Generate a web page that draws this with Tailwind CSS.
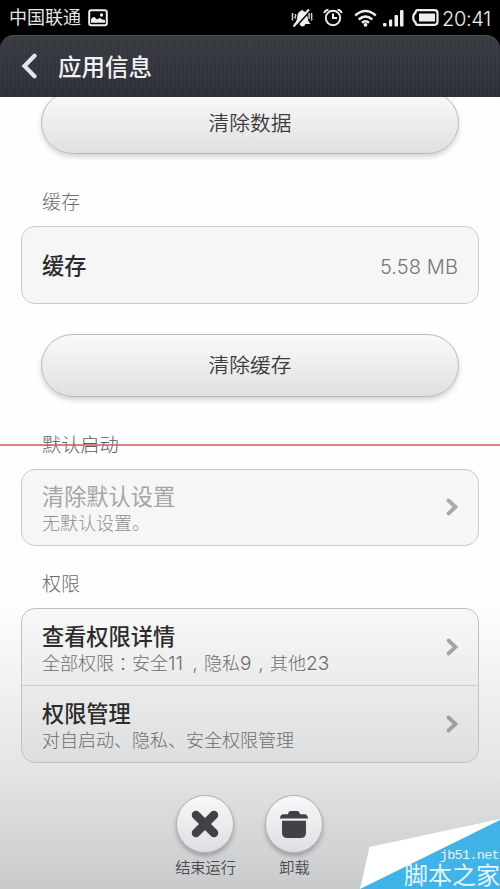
<!DOCTYPE html>
<html lang="zh-CN">
<head>
<meta charset="utf-8">
<title>应用信息</title>
<script src="https://cdn.jsdelivr.net/npm/@tailwindcss/browser@4"></script>
</head>
<body class="bg-black">
<div class="relative flex h-[889px] w-[500px] flex-col overflow-hidden bg-black font-['Roboto','Noto_Sans_CJK_SC',sans-serif]">
  <!-- status bar -->
  <div class="flex h-[35px] shrink-0 items-center pl-[9px] pr-[7px] text-[#e4e4e4]">
    <span class="pt-px text-[18px] leading-[34px]">中国联通</span>
    <svg class="ml-[7px]" width="20" height="18" viewBox="0 0 20 18"><rect x="1.200" y="1.200" width="17.600" height="15" rx="2" fill="none" stroke="#eee" stroke-width="2"/><path d="M3 13.800v-3.300q2-3.500 4-2l2 2 2.500-1.500q2 0 2.500 1.500l3 .5v2.800z" fill="#eee"/><circle cx="13.500" cy="6" r="1.700" fill="#eee"/></svg>
    <div class="ml-auto flex items-center">
      <svg width="22" height="20" viewBox="0 0 22 20"><path d="M3 16q3-2.500 3.200-7Q6.500 4 9.800 3q1.200-2.200 2.600 0Q16.500 4.500 16.500 9q.2 4.500 3 7zM8.500 16h6q-1 2.500-3 2.500t-3-2.500z" fill="#eee"/><path d="M4 19.500 19.500 2.500" stroke="#000" stroke-width="1.800"/><path d="M2.500 18.500 18 1.500" stroke="#eee" stroke-width="2"/><path d="M1 5l1 1.500L1 8l1 1.500L1 11l1 1.500M4 6l.8 1.500L4 9l.6 1.500M18.500 5l-.7 1.500.7 1.500-.7 1.500.7 1.500M21 5l-.7 1.500L21 8l-.7 1.500.7 1.500-.7 1.500" fill="none" stroke="#ddd" stroke-width="1.300"/></svg>
      <svg class="ml-[10px]" width="20" height="19" viewBox="0 0 20 19"><circle cx="10" cy="10" r="7.200" fill="none" stroke="#eee" stroke-width="1.900"/><path d="M10 5.500V10h4M1.200 5Q2 2 5.500 1.700M18.800 5Q18 2 14.500 1.700" fill="none" stroke="#eee" stroke-width="2"/></svg>
      <svg class="ml-[11px]" width="23" height="18" viewBox="0 0 23 18"><g fill="none" stroke="#eee" stroke-width="2.500"><path d="M1.200 6.500q10.300-9 20.600 0"/><path d="M4.700 10.500q6.800-6 13.600 0"/><path d="M8 13.800q3.500-3 7 0"/></g><circle cx="11.500" cy="15.800" r="1.900" fill="#eee"/></svg>
      <svg class="ml-[6px]" width="21" height="18" viewBox="0 0 21 18" fill="#eee"><rect x="0" y="14" width="3.500" height="3.500" rx="1"/><rect x="6" y="10.500" width="3.200" height="7" rx="1"/><rect x="11.500" y="6" width="3.500" height="11.500" rx="1"/><rect x="17" y="1" width="3.500" height="16.500" rx="1"/></svg>
      <svg class="ml-[8px]" width="27" height="17" viewBox="0 0 27 17"><path d="M5.500 1.200h17q3 0 3 3v8.600q0 3-3 3h-17q-2 0-2-2.500Q1.200 12 1.200 8.500T3.500 3.700q0-2.500 2-2.500z" fill="none" stroke="#eee" stroke-width="2.200"/><rect x="7" y="4.500" width="16" height="8" rx=".5" fill="#eee"/></svg>
      <span class="ml-[3px] w-[51px] whitespace-nowrap pt-[2px] font-['Inter','Roboto',sans-serif] text-[20px] font-light leading-[34px] tracking-[-0.300px] text-[#f0f0f0]">20:41</span>
    </div>
  </div>
  <!-- title bar -->
  <div class="flex h-[62px] shrink-0 items-center rounded-t-[14px] border-t border-[#4b4e55] bg-[repeating-linear-gradient(90deg,#ffffff07_0px,#ffffff07_1px,transparent_1px,transparent_4px),linear-gradient(#393c43,#2c2f37)] pl-[21px]">
    <svg class="mb-[2px]" width="17" height="26" viewBox="0 0 17 26"><path d="M13.500 2.800 3.500 13l10 10.200" fill="none" stroke="#e4e6e6" stroke-width="4.200" stroke-linecap="round"/></svg>
    <span class="ml-[20px] pt-[3px] text-[23.500px] font-medium leading-[60px] text-[#f2f2f2]">应用信息</span>
  </div>
  <!-- content -->
  <div class="flex min-h-0 flex-1 flex-col overflow-hidden bg-[linear-gradient(#fefefe_0px,#fefefe_500px,#e4e5e7_670px,#c9cacc_792px)] px-[21px]">
    <div class="mx-[20px] -mt-[6px] h-[63px] shrink-0 rounded-full border border-[#b9b9b9] bg-linear-to-b from-[#fafafa] to-[#e0e0e0] text-center text-[20.700px] font-[350] leading-[65px] text-[#3c3c3c] shadow-[0_3px_5px_#0000002b]">清除数据</div>
    <div class="mt-[35px] h-[37px] shrink-0 pl-[21px] text-[19px] font-light leading-[28px] text-[#6c6c6c]">缓存</div>
    <div class="flex h-[78px] shrink-0 items-center justify-between rounded-[14px] border border-[#cbcbcb] bg-[#f6f6f6] px-[20px]">
      <span class="pt-[4px] text-[22.200px] font-medium text-[#2c2c2c]">缓存</span>
      <span class="pt-[3px] font-['Inter','Roboto',sans-serif] text-[20px] font-light tracking-[0.100px] text-[#777]">5.58 MB</span>
    </div>
    <div class="mx-[20px] mt-[30px] h-[63px] shrink-0 rounded-full border border-[#b9b9b9] bg-linear-to-b from-[#fafafa] to-[#e0e0e0] text-center text-[20.700px] font-[350] leading-[62px] text-[#3c3c3c] shadow-[0_3px_5px_#0000002b]">清除缓存</div>
    <div class="mt-[35px] h-[37px] shrink-0 pl-[21px] text-[19.200px] font-light leading-[28px] text-[#5c5c5c]">默认启动</div>
    <div class="flex h-[77px] shrink-0 items-center justify-between rounded-[14px] border border-[#cbcbcb] bg-[#f6f6f6] pl-[20px] pr-[19px]">
      <div class="pt-[4px]">
        <div class="text-[22.200px] leading-[28px] text-[#a5a5a5]">清除默认设置</div>
        <div class="text-[18px] font-light leading-[26px] text-[#8f8f8f]">无默认设置。</div>
      </div>
      <svg class="mb-[1px]" width="14" height="20" viewBox="0 0 14 20"><path d="M3.500 3.500 10.500 10l-7 6.500" fill="none" stroke="#a8a8a8" stroke-width="3.800" stroke-linecap="round"/></svg>
    </div>
    <div class="mt-[25px] h-[37px] shrink-0 pl-[21px] text-[19px] font-light leading-[28px] text-[#6c6c6c]">权限</div>
    <div class="h-[155px] shrink-0 rounded-[14px] border border-[#c0c1c2] bg-linear-to-b from-[#f8f8f8] to-[#dddedf]">
      <div class="flex h-[77px] items-center justify-between border-b border-[#cdcdce] pl-[20px] pr-[19px]">
        <div class="pt-[5px]">
          <div class="text-[22.200px] font-medium leading-[28px] text-[#2c2c2c]">查看权限详情</div>
          <div class="flex h-[25px] whitespace-nowrap text-[18px] font-light leading-[25px] text-[#6c6c6c]"><span>全部权限</span><span lang="zh-TW" class="font-['Noto_Sans_CJK_TC',sans-serif]">：</span><span>安全</span><span class="w-[18px] font-['Inter','Roboto',sans-serif] text-[19px]">11</span><span class="w-[18px] text-center font-['Inter','Roboto',sans-serif]">,</span><span>隐私</span><span class="w-[12px] font-['Inter','Roboto',sans-serif] text-[19px]">9</span><span class="w-[18px] text-center font-['Inter','Roboto',sans-serif]">,</span><span>其他</span><span class="font-['Inter','Roboto',sans-serif] text-[19px]">23</span></div>
        </div>
        <svg class="mb-[1px]" width="14" height="20" viewBox="0 0 14 20"><path d="M3.500 3.500 10.500 10l-7 6.500" fill="none" stroke="#a4a4a4" stroke-width="3.800" stroke-linecap="round"/></svg>
      </div>
      <div class="flex h-[76px] items-center justify-between pl-[20px] pr-[19px]">
        <div class="pt-[5px]">
          <div class="text-[22.200px] font-medium leading-[28px] text-[#2c2c2c]">权限管理</div>
          <div class="text-[18px] font-light leading-[26px] text-[#6c6c6c]">对自启动、隐私、安全权限管理</div>
        </div>
        <svg class="mb-[1px]" width="14" height="20" viewBox="0 0 14 20"><path d="M3.500 3.500 10.500 10l-7 6.500" fill="none" stroke="#a0a0a0" stroke-width="3.800" stroke-linecap="round"/></svg>
      </div>
    </div>
    <div class="mt-[32px] flex shrink-0 justify-center gap-[19px]">
      <div class="flex w-[70px] flex-col items-center">
        <div class="mr-[1px] flex size-[58px] items-center justify-center rounded-full border border-[#aeb0b3] bg-linear-to-b from-[#f8f8f9] to-[#dedfe2] shadow-[0_3px_4px_#00000040]">
          <svg width="28" height="28" viewBox="0 0 28 28"><path d="M5 5l18 18M23 5 5 23" stroke="#404246" stroke-width="8.500" stroke-linecap="round"/></svg>
        </div>
        <div class="mt-[4px] whitespace-nowrap text-[15.200px] font-[350] leading-[22px] text-[#484a4d]">结束运行</div>
      </div>
      <div class="flex w-[70px] flex-col items-center">
        <div class="mr-[1px] flex size-[58px] items-center justify-center rounded-full border border-[#aeb0b3] bg-linear-to-b from-[#f8f8f9] to-[#dedfe2] shadow-[0_3px_4px_#00000040]">
          <svg width="28" height="28" viewBox="0 0 28 28" fill="#404246"><path d="M0 8.500q0-4.300 4-4.300h4q.5-3.200 3-3.200h6q2.500 0 3 3.200h4q4 0 4 4.300z"/><path d="M2 10.700h24v11.800q0 5.500-5.500 5.500h-13Q2 28 2 22.500z"/></svg>
        </div>
        <div class="mt-[4px] whitespace-nowrap text-[15.200px] font-[350] leading-[22px] text-[#484a4d]">卸载</div>
      </div>
    </div>
  </div>
  <!-- strike line over the page -->
  <div class="absolute left-0 top-[444px] h-[2px] w-full bg-[#d5606c]/80"></div>
  <!-- corner watermark -->
  <div class="absolute bottom-0 right-0 h-[71px] w-[140px]">
    <svg class="absolute inset-0" width="140" height="71" viewBox="0 0 140 71"><path d="M9.500 29 140 1v70H0z" fill="#fff"/><path d="M0 71 140 2v69z" fill="#40b3e9"/></svg>
    <div class="absolute right-px top-[30px] whitespace-nowrap font-['Liberation_Mono',monospace] text-[13.500px] leading-[16px] tracking-[-0.700px] text-[#e5f6ff]">jb51.net</div>
    <div class="absolute right-0 top-[46px] whitespace-nowrap text-[24px] leading-[25px] text-[#e5f6ff]">脚本之家</div>
  </div>
</div>
</body>
</html>
